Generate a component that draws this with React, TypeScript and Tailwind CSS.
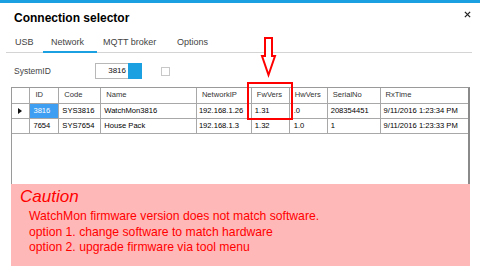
import React from "react";

// Connection selector dialog: tabs, SystemID field, device grid and a caution panel.

const columns = [
  { key: "hdr", label: "", width: 18 },
  { key: "id", label: "ID", width: 29 },
  { key: "code", label: "Code", width: 42 },
  { key: "name", label: "Name", width: 96 },
  { key: "ip", label: "NetworkIP", width: 55 },
  { key: "fw", label: "FwVers", width: 38 },
  { key: "hw", label: "HwVers", width: 38 },
  { key: "serial", label: "SerialNo", width: 53 },
  { key: "rx", label: "RxTime", width: 88 },
];

const rows = [
  {
    id: "3816",
    code: "SYS3816",
    name: "WatchMon3816",
    ip: "192.168.1.26",
    fw: "1.31",
    hw: ".0",
    serial: "208354451",
    rx: "9/11/2016 1:23:34 PM",
    current: true,
  },
  {
    id: "7654",
    code: "SYS7654",
    name: "House Pack",
    ip: "192.168.1.3",
    fw: "1.32",
    hw: "1.0",
    serial: "1",
    rx: "9/11/2016 1:23:33 PM",
    current: false,
  },
];

const tabs = [
  { label: "USB", w: "w-[37px] pl-[9px]" },
  { label: "Network", w: "w-[54px] pl-[8px]", active: true },
  { label: "MQTT broker", w: "w-[74px] pl-[6px]" },
  { label: "Options", w: "w-[60px] pl-[6px]" },
];

export default function App() {
  return (
    <div className="relative w-[480px] h-[277px] overflow-hidden bg-white font-['Liberation_Sans',Arial,sans-serif] text-[#1a1a1a]">
      {/* accent strip */}
      <div className="h-[3px] bg-[#1ba1e2]" />

      {/* title + close */}
      <div className="flex items-start justify-between pt-[7px] pl-[14px] pr-[9px]">
        <h1 className="text-[12px] leading-[16px] font-bold text-black">Connection selector</h1>
        <svg viewBox="0 0 8 8" className="w-[7px] h-[7px] mt-[1px]" aria-label="Close">
          <path d="M1 1 L7 7 M7 1 L1 7" stroke="#222" strokeWidth="1.5" />
        </svg>
      </div>

      {/* tabs */}
      <div className="mt-[10px] ml-[6px] w-[466px] flex border-b border-[#d4d4d4]">
        {tabs.map((t) => (
          <div
            key={t.label}
            className={`${t.w} text-[9px] leading-[12px] pb-[3px] ${
              t.active ? "border-b-2 border-[#1ba1e2] -mb-px" : "border-b-2 border-transparent -mb-px"
            } text-[#444]`}
          >
            {t.label}
          </div>
        ))}
      </div>

      {/* system id */}
      <div className="mt-[10px] flex items-center h-[16px] pl-[14px]">
        <span className="w-[81px] text-[8.5px] text-[#444]">SystemID</span>
        <div className="flex h-[16px]">
          <div className="w-[33px] border border-[#b8b8b8] border-r-0 text-right pr-[2px] text-[8px] leading-[14px] text-[#111]">
            3816
          </div>
          <div className="w-[14px] bg-[#1ba1e2]" />
        </div>
        <div className="ml-[19px] w-[9px] h-[9px] border border-[#c8c8c8] bg-white" />
      </div>

      {/* device grid */}
      <div className="mt-[8px] ml-[11px] w-[459px] h-[97px] border-l border-t border-[#9a9a9a] border-r-2 border-r-[#8a8a8a] bg-white">
        <table className="table-fixed border-collapse text-[7.6px] leading-[14px]">
          <colgroup>
            {columns.map((c) => (
              <col key={c.key} style={{ width: c.width }} />
            ))}
          </colgroup>
          <thead>
            <tr className="h-[15px]">
              {columns.map((c, i) => (
                <th
                  key={c.key}
                  className={`font-normal text-left pl-[5px] whitespace-nowrap overflow-hidden text-[#333] border-b border-[#a8a8a8] ${
                    i < columns.length - 1 ? "border-r" : ""
                  } border-[#a8a8a8]`}
                >
                  {c.label}
                </th>
              ))}
            </tr>
          </thead>
          <tbody>
            {rows.map((r) => (
              <tr key={r.id} className="h-[15px]">
                <td className="border-b border-r border-[#a8a8a8] pl-[6px]">
                  {r.current && (
                    <svg viewBox="0 0 4 6" className="w-[4px] h-[6px]">
                      <path d="M0 0 L4 3 L0 6 Z" fill="#111" />
                    </svg>
                  )}
                </td>
                <td
                  className={`border-b border-r border-[#a8a8a8] pl-[3px] ${
                    r.current ? "bg-[#3d9ef2] text-white" : "text-black"
                  }`}
                >
                  {r.id}
                </td>
                <td className="border-b border-r border-[#a8a8a8] pl-[3px] text-black">{r.code}</td>
                <td className="border-b border-r border-[#a8a8a8] pl-[3px] text-black">{r.name}</td>
                <td className="border-b border-r border-[#a8a8a8] pl-[2px] text-black whitespace-nowrap overflow-hidden">
                  {r.ip}
                </td>
                <td className="border-b border-r border-[#a8a8a8] pl-[3px] text-black">{r.fw}</td>
                <td className="border-b border-r border-[#a8a8a8] pl-[4px] text-black">{r.hw}</td>
                <td className="border-b border-r border-[#a8a8a8] pl-[3px] text-black">{r.serial}</td>
                <td className="border-b border-[#a8a8a8] pl-[3px] text-black whitespace-nowrap">{r.rx}</td>
              </tr>
            ))}
          </tbody>
        </table>
      </div>

      {/* caution panel */}
      <div className="ml-[11px] w-[459px] h-[82px] bg-[#ffb8b8] text-[#ff0000] pt-[3px]">
        <p className="pl-[9px] text-[17px] leading-[20px] italic">Caution</p>
        <div className="mt-[2px] pl-[18px] text-[12.2px] leading-[15.5px]">
          <p>WatchMon firmware version does not match software.</p>
          <p>option 1. change software to match hardware</p>
          <p>option 2. upgrade firmware via tool menu</p>
        </div>
      </div>

      {/* annotation overlay: arrow + highlight box on FwVers */}
      <svg
        className="absolute left-[258px] top-[34px] w-[22px] h-[46px]"
        viewBox="0 0 22 46"
      >
        <polygon
          points="7,4 14,4 14,22 17,22 10.5,41 4,22 7,22"
          fill="white"
          stroke="#ff0000"
          strokeWidth="2"
          strokeLinejoin="miter"
        />
      </svg>
      <div className="absolute left-[247px] top-[82px] w-[46px] h-[38px] border-2 border-[#ff0000]" />
    </div>
  );
}
